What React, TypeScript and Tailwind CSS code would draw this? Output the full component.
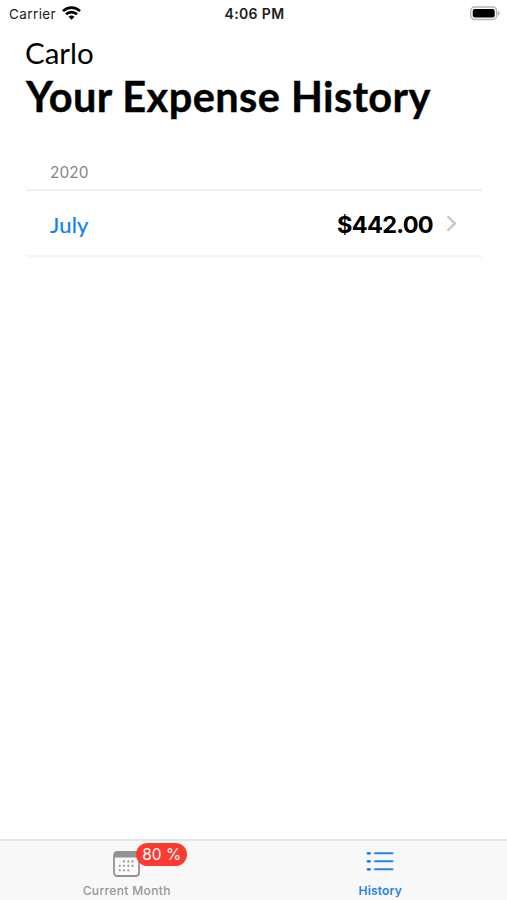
const INTER = "font-['Inter','Liberation_Sans',sans-serif]";
const LATO = "font-['Lato','Liberation_Sans',sans-serif]";

const CALENDAR_DOTS = [
  [11, 10], [15.3, 10], [19.6, 10],
  [6.8, 14.3], [11, 14.3], [15.3, 14.3], [19.6, 14.3],
  [6.8, 18.6], [11, 18.6], [15.3, 18.6],
];

function StatusBar() {
  return (
    <div className="grid h-7 grid-cols-3 items-center pr-[7px] pl-[9px] text-[13.5px] leading-7 text-[#1c1c1c]">
      <div className="flex items-center gap-[6px]">
        <span className="tracking-[0.4px]">Carrier</span>
        <svg className="-mt-[2px]" width="19" height="14" viewBox="0 0 19 14" fill="none" stroke="#000" strokeWidth="2.7">
          <path d="M1 5.1C5.8 .5 13.2 .5 18 5.1" />
          <path d="M4 8.3C7.1 5.4 11.9 5.4 15 8.3" />
          <path d="M6.6 10.7C8.3 9.2 10.7 9.2 12.4 10.7L9.5 13.7Z" fill="#000" stroke="none" />
        </svg>
      </div>
      <span className="text-center text-[14px] font-semibold tracking-[0.35px]">4:06 PM</span>
      <svg className="-mt-[2px] justify-self-end" width="31" height="15" viewBox="0 0 31 15">
        <rect x="1.7" y="1" width="26" height="12.5" rx="4" fill="#fff" stroke="#b5b5b5" strokeWidth="1.4" />
        <rect x="3.7" y="3" width="22" height="8.5" rx="2" fill="#000" />
        <path d="M29 5c2 1 2 3.6 0 4.6z" fill="#aaa" />
      </svg>
    </div>
  );
}

function CalendarIcon() {
  return (
    <svg width="27" height="26" viewBox="0 0 27 25" preserveAspectRatio="none">
      <rect x="1" y="1" width="25" height="23" rx="3" fill="#fafafa" stroke="#929292" strokeWidth="1.8" />
      <path d="M1 6.3V4a3 3 0 0 1 3-3h19a3 3 0 0 1 3 3v2.3z" fill="#929292" />
      {CALENDAR_DOTS.map(([x, y]) => (
        <circle key={`${x}-${y}`} cx={x} cy={y} r="1.1" fill="#969696" />
      ))}
    </svg>
  );
}

function ListIcon() {
  return (
    <svg width="28" height="21" viewBox="0 0 28 21" stroke="#2382ea" strokeLinecap="round">
      {[2.3, 10.3, 18.3].map((y) => (
        <g key={y}>
          <path d={`M2 ${y}h1.6`} strokeWidth="2.7" />
          <path d={`M9 ${y}h17.5`} strokeWidth="2" />
        </g>
      ))}
    </svg>
  );
}

export default function App() {
  return (
    <div className={`flex h-[900px] w-[507px] flex-col overflow-hidden bg-white ${INTER}`}>
      <StatusBar />
      <main className={`flex-1 pr-[25px] pl-[26px] ${LATO}`}>
        <header className="pt-[7px] text-black">
          <p className="-ml-px text-[29.5px] leading-9">Carlo</p>
          <h1 className="text-[41.5px] leading-[51px] font-bold tracking-[0.43px] whitespace-nowrap [-webkit-text-stroke:0.4px_#000]">Your Expense History</h1>
        </header>
        <section className="mt-[35px]">
          <h2 className={`h-[34px] border-b-2 border-[#f0f0f0] pl-6 text-[15.5px] leading-[32px] text-[#858585] ${INTER}`}>2020</h2>
          <div className="flex h-[67px] items-center border-b-[3px] border-[#f6f6f6] pt-[3px] pr-[25px] pl-6">
            <span className="text-[22px] tracking-[0.2px] text-[#0b82f4] [-webkit-text-stroke:0.2px_#0b82f4]">July</span>
            <span className={`ml-auto text-[23.5px] font-bold tracking-[-0.7px] text-black ${INTER}`}>$442.00</span>
            <svg className="-mt-[3px] ml-[13px]" width="11" height="17" viewBox="0 0 11 17" fill="none" stroke="#c5c5c7" strokeWidth="2.2">
              <path d="M1.5 1.2L9 8.4L1.5 15.6" />
            </svg>
          </div>
        </section>
      </main>
      <nav className="grid h-[61px] grid-cols-2 border-t-2 border-[#e5e5e5] bg-[#f8f8f8]">
        <div className="flex flex-col items-center pt-[10px] text-[#969696]">
          <div className="relative h-[25px]">
            <CalendarIcon />
            <span className="absolute -top-[8px] left-[23px] flex h-[23px] w-[51px] items-center justify-center rounded-full bg-[#fc3b30] text-[15.5px] whitespace-nowrap text-white">80 %</span>
          </div>
          <span className="mt-[7px] text-[12px] leading-4 font-medium tracking-[0.35px]">Current Month</span>
        </div>
        <div className="flex flex-col items-center pt-[10px] text-[#2382ea]">
          <ListIcon />
          <span className="mt-[11px] text-[12px] leading-4 font-semibold tracking-[0.2px]">History</span>
        </div>
      </nav>
    </div>
  );
}
